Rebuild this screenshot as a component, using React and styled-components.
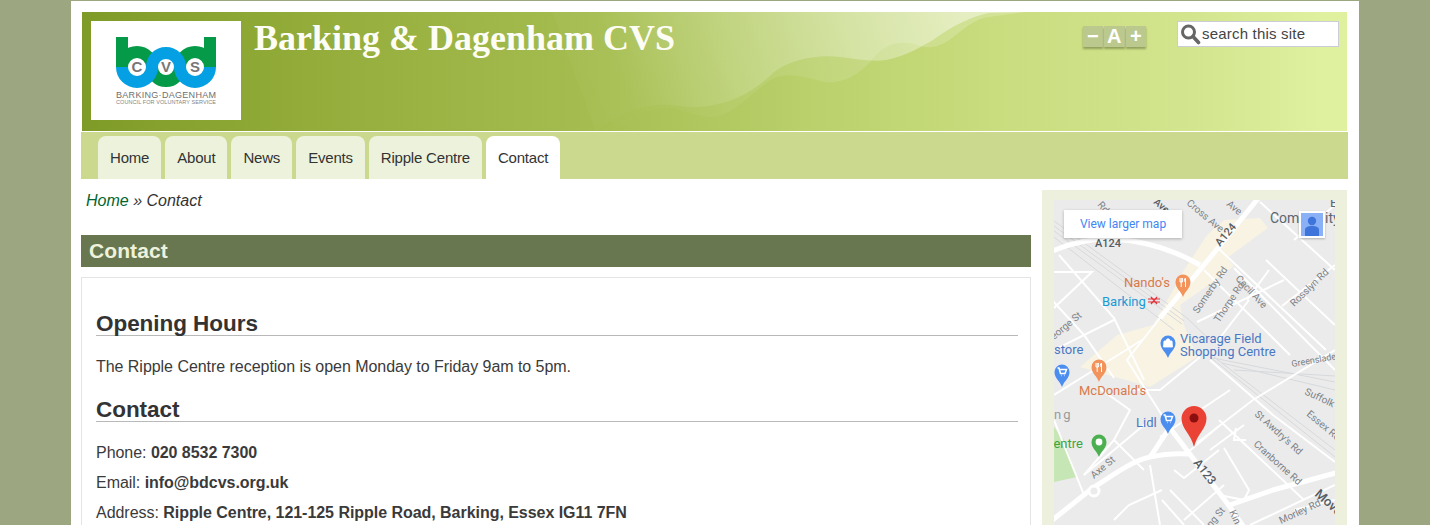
import React from "react";
import styled, { createGlobalStyle } from "styled-components";

const GlobalStyle = createGlobalStyle`
  html, body {
    margin: 0;
    height: 100%;
    overflow: hidden;
  }
  body {
    background: #9ca782;
    font-family: "Liberation Sans", Arial, sans-serif;
    color: #3a3a3a;
  }
`;

const tabs = ["Home", "About", "News", "Events", "Ripple Centre", "Contact"];

// map data, coordinates are px inside the 281 wide map
const bigRoads = [
  "M206 -4 L164 48 L106 118",
  "M-4 52 C20 42 40 38 60 39 C90 41 120 50 146 65",
  "M116 228 L173 303 L192 330",
  "M-4 322 L36 290 C60 274 80 260 96 257 C110 254 122 253 135 254",
  "M176 305 L219 290 L285 272",
  "M96 257 C104 246 108 238 116 228",
];
const roads = [
  "M199 200 L143 243", "M176 190 L106 237", "M106 118 L73 160 L116 228", "M206 2 L281 70",
  "M164 48 L272 150", "M212 60 L281 125", "M180 68 L281 170", "M150 70 L236 155",
  "M228 106 L281 65", "M193 100 L215 70", "M162 143 L195 100", "M240 40 L281 5",
  "M199 200 L281 150", "M165 220 L250 300", "M143 122 L230 80", "M0 72 L38 72 L0 108",
  "M5 55 L60 118 L90 180", "M-2 100 L30 135 L60 178", "M0 150 L60 120", "M45 188 L76 210 L60 240 L30 275",
  "M0 195 L40 170 L88 140", "M146 157 L106 190 L73 190", "M156 160 L219 215 L281 262",
  "M30 275 L96 220", "M0 220 L30 295", "M60 240 L90 270", "M116 290 L150 325",
  "M96 265 L106 325", "M133 253 L165 226", "M156 250 L190 225", "M170 248 L195 290 L190 300 L165 295",
  "M120 270 L130 278 L165 250", "M60 320 L75 305 L108 290", "M108 300 L130 325", "M130 320 L170 285",
  "M192 240 L180 240 L182 228", "M240 310 L281 300", "M196 325 L281 285",
];
const rails = [
  "M-4 18 L133 118 L156 140", "M-4 23 L130 121", "M-4 28 L128 124", "M-4 34 L120 130",
  "M156 157 L281 257", "M160 157 L281 250", "M159 158 L281 182",
  "M168 163 L281 190", "M180 170 L281 176",
];
const streetLabels = [
  { t: "Rd", x: 43, y: 5, r: 50 },
  { t: "Ave", x: 99, y: 3, r: 40, strong: true },
  { t: "Cross Ave", x: 132, y: 4, r: 40 },
  { t: "Ave", x: 172, y: 5, r: 40 },
  { t: "A124", x: 41, y: 47, r: 0, strong: true, size: 11 },
  { t: "A124", x: 166, y: 47, r: -50, strong: true, size: 11 },
  { t: "Somerby Rd", x: 144, y: 114, r: -56 },
  { t: "Cecil Ave", x: 181, y: 79, r: 47 },
  { t: "Thorpe Rd", x: 165, y: 123, r: -56 },
  { t: "Rosslyn Rd", x: 240, y: 107, r: -44 },
  { t: "eorge St", x: 0, y: 140, r: -40 },
  { t: "Greenslade R", x: 238, y: 167, r: -10, size: 9 },
  { t: "Suffolk R", x: 250, y: 194, r: 25 },
  { t: "Essex Ro", x: 252, y: 215, r: 40 },
  { t: "St Awdry's Rd", x: 200, y: 215, r: 42 },
  { t: "Cranborne Rd", x: 199, y: 245, r: 42 },
  { t: "A123", x: 139, y: 263, r: 52, strong: true, size: 12 },
  { t: "Axe St", x: 40, y: 279, r: -40 },
  { t: "Move", x: 260, y: 295, r: 42, strong: true, size: 13 },
  { t: "Morley Rd", x: 227, y: 324, r: -25 },
  { t: "Kin", x: 175, y: 312, r: 65 },
  { t: "ng St", x: 157, y: 328, r: -50 },
];
const placeLabels = [
  { t: "Nando's", x: 70, y: 87, c: "#d9794c" },
  { t: "Barking", x: 48, y: 106, c: "#1a9ad6" },
  { t: "Vicarage Field", x: 126, y: 143, c: "#4a78c4" },
  { t: "Shopping Centre", x: 126, y: 156, c: "#4a78c4" },
  { t: "store", x: 0, y: 154, c: "#4a78c4" },
  { t: "McDonald's", x: 25, y: 195, c: "#d9794c" },
  { t: "Lidl", x: 82, y: 227, c: "#4a78c4" },
  { t: "Centre", x: -9, y: 248, c: "#3fa33f" },
  { t: "ng", x: 0, y: 219, c: "#9a9a9a", spacing: 2 },
  { t: "Com", x: 216, y: 23, c: "#5b6670", size: 14 },
  { t: "ity", x: 271, y: 23, c: "#5b6670", size: 14 },
  { t: "E", x: 276, y: 7, c: "#5b6670" },
];
const pins = [
  { x: 129, y: 82, c: "#f2935c", kind: "food" },
  { x: 114, y: 143, c: "#4b8ef0", kind: "bag" },
  { x: 8, y: 172, c: "#4b8ef0", kind: "cart" },
  { x: 45, y: 167, c: "#f2935c", kind: "food" },
  { x: 114, y: 219, c: "#4b8ef0", kind: "cart" },
  { x: 45, y: 242, c: "#4cb050", kind: "dot" },
];

const Pin = ({ x, y, c, kind }) => (
  <g transform={`translate(${x} ${y})`}>
    <path d="M0 15C-2 9 -7.500 6.500 -7.500 0A7.500 7.500 0 1 1 7.500 0C7.500 6.500 2 9 0 15Z" fill={c} />
    {kind === "food" && <path d="M-3 -4V0H-1.800V5M-1.800 -4V0M-0.600 -4V0H-1.800M2.500 -4V5M2.500 -4C1 -3 1 0 2.500 0" stroke="#fff" strokeWidth="1" fill="none" />}
    {kind === "bag" && <path d="M-4 -2H4L4.500 4H-4.500ZM-2 -2C-2 -5 2 -5 2 -2" fill="#fff" stroke="#fff" strokeWidth="0.800" />}
    {kind === "cart" && <path d="M-4.500 -4H-3L-1.500 1.500H3L4.500 -2.500H-2.500M-1 3.500H-0.500M2.500 3.500H3" stroke="#fff" strokeWidth="1.500" fill="none" />}
    {kind === "dot" && <circle r="3.400" fill="#fff" />}
  </g>
);

const MapDrawing = () => (
  <MapSvg viewBox="0 0 281 340" aria-hidden="true">
    <rect width="281" height="340" fill="#ebebeb" />
    <path d="M153 35L170 20L206 18L214 28L173 58L180 66L156 84L126 105L130 125L143 157L96 187L26 167L63 135L99 125L118 92L130 70Z" fill="#f8f3e3" />
    <path d="M0 227L10 240L23 277L0 282Z" fill="#c6e6b5" />
    {rails.map((d) => <path key={d} d={d} stroke="#d6d9dc" strokeWidth="1" fill="none" />)}
    {roads.map((d) => <path key={d} d={d} stroke="#fff" strokeWidth="2" fill="none" />)}
    {bigRoads.map((d) => <path key={d} d={d} stroke="#fff" strokeWidth="5" fill="none" />)}
    <circle cx="40" cy="291" r="5" fill="#ebebeb" stroke="#fff" strokeWidth="3" />
    {streetLabels.map((l) => (
      <StreetText
        key={l.t + l.x}
        transform={`translate(${l.x} ${l.y}) rotate(${l.r})`}
        $strong={l.strong}
        $size={l.size}
      >
        {l.t}
      </StreetText>
    ))}
    {placeLabels.map((l) => (
      <PlaceText key={l.t} x={l.x} y={l.y} fill={l.c} letterSpacing={l.spacing} $size={l.size}>{l.t}</PlaceText>
    ))}
    <path d="M94 99H106M94 102H106M97 97L103 104M103 97L97 104" stroke="#e2323a" strokeWidth="1.200" fill="none" />
    {pins.map((p) => <Pin key={p.x + "-" + p.y} {...p} />)}
    <path d="M140 247C137 234 127.500 229 127.500 218.500A12.500 12.500 0 1 1 152.500 218.500C152.500 229 143 234 140 247Z" fill="#ea4335" />
    <circle cx="140" cy="218" r="4.500" fill="#8c0f0f" />
  </MapSvg>
);

const Logo = () => (
  <LogoBox>
    <svg width="150" height="99" viewBox="0 0 150 99" aria-label="Barking and Dagenham CVS logo">
      <rect x="25" y="16" width="12" height="30" fill="#049a47" />
      <rect x="113" y="16" width="12" height="30" fill="#049a47" />
      <path d="M31 46A15 15 0 0 1 61 46M61 46A14 14 0 0 0 89 46M89 46A15 15 0 0 1 119 46" stroke="#049a47" strokeWidth="12" fill="none" />
      <path d="M31 46A15 15 0 0 0 61 46M61 46A14 14 0 0 1 89 46M89 46A15 15 0 0 0 119 46" stroke="#05a0e4" strokeWidth="12" fill="none" />
      <LogoLetter x="46" y="51">C</LogoLetter>
      <LogoLetter x="75" y="51">V</LogoLetter>
      <LogoLetter x="104" y="51">S</LogoLetter>
      <text x="75" y="76.500" textAnchor="middle" fontFamily="Liberation Sans, sans-serif" fontSize="9" fill="#6f6f6f" textLength="100">BARKING·DAGENHAM</text>
      <text x="75" y="83" textAnchor="middle" fontFamily="Liberation Sans, sans-serif" fontSize="5.500" fill="#858585" textLength="100">COUNCIL FOR VOLUNTARY SERVICE</text>
    </svg>
  </LogoBox>
);

export default function App() {
  return (
    <>
      <GlobalStyle />
      <Wrapper>
        <Header>
          <Waves viewBox="0 0 1265 119" preserveAspectRatio="none" aria-hidden="true">
            <defs>
              <linearGradient id="fade" gradientUnits="userSpaceOnUse" x1="560" y1="119" x2="880" y2="0">
                <stop offset="0" stopColor="#fff" stopOpacity="0.02" />
                <stop offset="0.5" stopColor="#fff" stopOpacity="0.2" />
                <stop offset="1" stopColor="#fff" stopOpacity="0.42" />
              </linearGradient>
            </defs>
            <path d="M514 119C530 108 545 96 575 93C590 92 605 96 618 95C645 92 665 85 690 62C705 48 735 42 758 45C775 47 790 50 804 48C825 44 840 34 851 28C870 14 890 4 907 1L944 0H470Z" fill="url(#fade)" />
            <path d="M535 119C548 108 558 98 585 96C600 96 615 105 628 105C650 105 665 85 688 68C700 60 720 63 738 69C755 74 775 65 790 48C800 34 815 28 832 32C845 37 855 37 870 26C885 14 895 6 907 5L944 0H470Z" fill="url(#fade)" opacity="0.45" />
          </Waves>
          <Logo />
          <SiteTitle>Barking &amp; Dagenham CVS</SiteTitle>
          <ResizeGroup>
            <ResizeButton>−</ResizeButton>
            <ResizeButton>A</ResizeButton>
            <ResizeButton>+</ResizeButton>
          </ResizeGroup>
          <SearchBox>
            <svg width="21" height="22" viewBox="0 0 21 22" aria-hidden="true">
              <circle cx="8.500" cy="9" r="6" fill="none" stroke="#666" strokeWidth="3" />
              <path d="M13 13.500L18.500 19.500" stroke="#666" strokeWidth="3.600" strokeLinecap="round" />
            </svg>
            <SearchInput placeholder="search this site" />
          </SearchBox>
        </Header>
        <Nav>
          {tabs.map((t) => (
            <Tab key={t} $active={t === "Contact"}>{t}</Tab>
          ))}
        </Nav>
        <Columns>
          <Main>
            <Breadcrumb>
              <a href="#home">Home</a> » Contact
            </Breadcrumb>
            <TitleBar>Contact</TitleBar>
            <ContentBox>
              <SectionTitle>Opening Hours</SectionTitle>
              <BodyText>The Ripple Centre reception is open Monday to Friday 9am to 5pm.</BodyText>
              <SectionTitle>Contact</SectionTitle>
              <BodyText>Phone: <strong>020 8532 7300</strong></BodyText>
              <BodyText $tight>Email: <strong>info@bdcvs.org.uk</strong></BodyText>
              <BodyText $tight>Address: <strong>Ripple Centre, 121-125 Ripple Road, Barking, Essex IG11 7FN</strong></BodyText>
            </ContentBox>
          </Main>
          <Sidebar>
            <MapFrame>
              <MapDrawing />
              <LargerMap>View larger map</LargerMap>
              <Pegman>
                <svg width="22" height="23" viewBox="0 0 22 23" aria-hidden="true">
                  <circle cx="11" cy="8" r="4.200" fill="#3f74db" />
                  <path d="M4 23V17C4 14 7 13 11 13C15 13 18 14 18 17V23Z" fill="#3f74db" />
                </svg>
              </Pegman>
            </MapFrame>
          </Sidebar>
        </Columns>
      </Wrapper>
    </>
  );
}

const Wrapper = styled.div`
  width: 1267px;
  margin: 1px 0 0 71px;
  padding: 11px 11px 0 10px;
  background: #fff;
  height: 600px;
`;

const Header = styled.header`
  position: relative;
  display: flex;
  align-items: flex-start;
  height: 119px;
  margin: 0 1px 1px;
  padding: 9px 8px 0 9px;
  box-sizing: border-box;
  background: linear-gradient(90deg, #7f9b27 0%, #93ac3a 18%, #a5bd50 40%, #b9d06b 57%, #c9dc7e 72%, #d3e58e 88%, #dff09f 98%);
`;

const Waves = styled.svg`
  position: absolute;
  left: 0;
  top: 0;
  width: 100%;
  height: 100%;
`;

const LogoBox = styled.div`
  position: relative;
  width: 150px;
  height: 99px;
  background: #fff;
  flex: none;
`;

const LogoLetter = styled.text`
  font-family: "Liberation Sans", sans-serif;
  font-size: 15px;
  font-weight: bold;
  fill: #777;
  text-anchor: middle;
`;

const SiteTitle = styled.h1`
  position: relative;
  margin: -3px 0 0 13px;
  font-family: "Liberation Serif", serif;
  font-size: 36px;
  line-height: 40px;
  font-weight: bold;
  color: #fdfdf6;
  flex: 1;
`;

const ResizeGroup = styled.div`
  position: relative;
  display: flex;
  gap: 1px;
  margin: 5px 31px 0 0;
  background: #d6e0ac;
`;

const ResizeButton = styled.span`
  width: 20.500px;
  height: 21px;
  background: #bcc98e;
  box-shadow: 0 2px 2px rgba(70, 80, 40, 0.45);
  color: #fff;
  font-size: 20px;
  font-weight: bold;
  line-height: 21px;
  text-align: center;
`;

const SearchBox = styled.div`
  position: relative;
  display: flex;
  align-items: center;
  gap: 1px;
  padding-left: 2px;
  box-sizing: border-box;
  width: 162px;
  height: 26px;
  background: #fff;
  border: 1px solid #ccccd6;
`;

const SearchInput = styled.input`
  width: 130px;
  border: 0;
  padding: 0 0 2px;
  outline: 0;
  font-family: "Liberation Sans", sans-serif;
  font-size: 15px;
  letter-spacing: 0.2px;
  &::placeholder {
    color: #444;
    opacity: 1;
  }
`;

const Nav = styled.nav`
  display: flex;
  gap: 4px;
  height: 47px;
  padding: 4px 0 0 17px;
  box-sizing: border-box;
  background: #cbd98e;
`;

const Tab = styled.a`
  padding: 0 12px;
  height: 43px;
  line-height: 43px;
  font-size: 15px;
  letter-spacing: -0.2px;
  color: #333;
  border-radius: 8px 8px 0 0;
  background: ${(p) => (p.$active ? "#fff" : "#edf2dc")};
`;

const Columns = styled.div`
  display: flex;
  gap: 11px;
  align-items: flex-start;
`;

const Main = styled.main`
  width: 950px;
`;

const Breadcrumb = styled.p`
  margin: 12px 0 0;
  padding-left: 5px;
  font-size: 16px;
  line-height: 20px;
  font-style: italic;
  color: #333;
  a {
    color: #00652e;
    text-decoration: none;
  }
`;

const TitleBar = styled.h1`
  margin: 24px 0 0;
  height: 32px;
  padding-left: 8px;
  background: #68774f;
  color: #eef2dc;
  font-size: 21px;
  line-height: 32px;
  letter-spacing: 0.1px;
`;

const ContentBox = styled.div`
  margin-top: 10px;
  padding: 12px 12px 20px 14px;
  border: 1px solid #e4e4e4;
`;

const SectionTitle = styled.h2`
  margin: 20px 0 0;
  height: 25px;
  font-size: 22.500px;
  line-height: 28px;
  letter-spacing: -0.05px;
  color: #333;
  border-bottom: 1px solid #b9b9b9;
`;

const BodyText = styled.p`
  margin: ${(p) => (p.$tight ? "10px" : "20px")} 0 0;
  height: 20px;
  font-size: 16px;
  line-height: 22px;
  letter-spacing: -0.04px;
`;

const Sidebar = styled.aside`
  width: 305px;
  margin-top: 11px;
  padding: 10px 12px;
  box-sizing: border-box;
  background: #ecf0dc;
`;

const MapFrame = styled.div`
  position: relative;
  width: 281px;
  height: 340px;
`;

const MapSvg = styled.svg`
  display: block;
  width: 281px;
  height: 340px;
`;

const StreetText = styled.text`
  font-family: Roboto, sans-serif;
  font-size: ${(p) => p.$size || 10}px;
  font-weight: ${(p) => (p.$strong ? 500 : 400)};
  fill: ${(p) => (p.$strong ? "#555c63" : "#7c8288")};
`;

const PlaceText = styled.text`
  font-family: Roboto, sans-serif;
  font-size: ${(p) => p.$size || 13}px;
`;

const LargerMap = styled.div`
  position: absolute;
  left: 10px;
  top: 10px;
  width: 118px;
  height: 28px;
  background: #fff;
  box-shadow: 0 1px 3px rgba(0, 0, 0, 0.25);
  color: #4285f4;
  font-family: Roboto, sans-serif;
  font-size: 12px;
  line-height: 28px;
  text-align: center;
`;

const Pegman = styled.div`
  position: absolute;
  right: 10px;
  top: 11px;
  width: 26px;
  height: 27px;
  box-sizing: border-box;
  border: 2px solid #fff;
  background: #8ab0f5;
  box-shadow: 0 1px 2px rgba(0, 0, 0, 0.25);
  svg {
    display: block;
  }
`;
